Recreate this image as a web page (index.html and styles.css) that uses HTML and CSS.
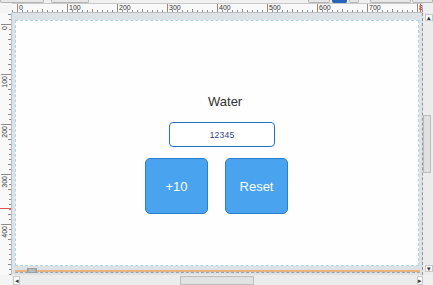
FILE: index.html
```html
<!DOCTYPE html>
<html>
<head>
<meta charset="utf-8">
<link rel="stylesheet" href="styles.css">
</head>
<body>
<div class="app">
  <div class="toolbar">
    <span class="tb w45"></span>
    <span class="tb w40"></span>
    <span class="tb-space"></span>
    <span class="tb w22"></span>
    <span class="tb tb-blue w16"></span>
    <span class="tb w10"></span>
    <span class="tb w42 gap"></span>
    <span class="tb w20"></span>
  </div>

  <div class="corner"></div>
  <div class="hruler">
    <div class="hlabels">
      <span>0</span><span>100</span><span>200</span><span>300</span><span>400</span><span>500</span><span>600</span><span>700</span><span>8</span>
    </div>
    <div class="hmark"></div>
  </div>
  <div class="corner-r"></div>

  <div class="vruler">
    <div class="vlabels">
      <div class="vl"><span>0</span></div>
      <div class="vl"><span>100</span></div>
      <div class="vl"><span>200</span></div>
      <div class="vl"><span>300</span></div>
      <div class="vl"><span>400</span></div>
    </div>
    <div class="vmark"></div>
  </div>

  <div class="workspace">
    <div class="canvas">
      <div class="title">Water</div>
      <div class="field">12345</div>
      <div class="buttons">
        <div class="btn">+10</div>
        <div class="btn">Reset</div>
      </div>
    </div>
    <div class="foot">
      <span class="foot-tag">800</span>
    </div>
  </div>

  <div class="vscroll">
    <div class="arrow up">&#9652;</div>
    <div class="vtrack"><div class="vthumb"></div></div>
    <div class="arrow down">&#9662;</div>
  </div>

  <div class="corner"></div>
  <div class="hscroll">
    <div class="arrow left">&#9666;</div>
    <div class="htrack"><div class="hthumb"></div></div>
    <div class="arrow right">&#9656;</div>
  </div>
  <div class="corner-r"></div>
</div>
</body>
</html>
```

FILE: styles.css
```css
* { box-sizing: border-box; }
html, body {
  margin: 0;
  padding: 0;
}
body {
  width: 433px;
  height: 285px;
  overflow: hidden;
  background: #f0f0f0;
  font-family: "Liberation Sans", Arial, sans-serif;
}
.app {
  display: grid;
  grid-template-columns: 12px 411px 10px;
  grid-template-rows: 3px 10px 262px 10px;
  width: 433px;
  height: 285px;
}

/* toolbar strip */
.toolbar {
  grid-column: 1 / 4;
  display: flex;
  align-items: flex-end;
  gap: 7px;
  overflow: hidden;
}
.tb {
  height: 3px;
  background: #e6e6e6;
  border: 1px solid #b4b4b4;
  border-top: none;
  border-radius: 0 0 2px 2px;
}
.tb-blue { background: #2a63b8; border-color: #2a63b8; }
.tb-space { flex: 0 0 205px; }
.w45 { width: 45px; }
.w40 { width: 40px; }
.w22 { width: 22px; }
.w16 { width: 16px; margin-left: -5px; }
.w10 { width: 10px; margin-left: -5px; }
.w42 { width: 42px; }
.gap { margin-left: 4px; }
.w20 { width: 22px; margin-left: -6px; }

.corner { background: #f4f4f4; }
.corner-r { background: #f0f0f0; }

/* horizontal ruler */
.hruler {
  position: relative;
  min-width: 0;
  background-color: #f9f9f9;
  border-top: 1px solid #c9c9c9;
  border-bottom: 1px solid #b9bec3;
  background-image:
    linear-gradient(to right, #8a8a8a 1px, transparent 1px),
    linear-gradient(to right, #8a8a8a 1px, transparent 1px);
  background-size: 5px 2px, 25px 3px;
  background-repeat: repeat-x;
  background-position: 5px 100%, 5px 100%;
  overflow: hidden;
}
.hlabels {
  display: flex;
  padding-left: 5px;
  height: 100%;
}
.hlabels span {
  flex: 0 0 50px;
  border-left: 1px solid #8a8a8a;
  font-size: 7px;
  line-height: 7px;
  color: #333;
  padding-left: 1px;
  height: 8px;
}
.hmark {
  position: absolute;
  left: 408px;
  top: 0;
  width: 1px;
  height: 100%;
  background: #e55050;
}

/* vertical ruler */
.vruler {
  position: relative;
  min-height: 0;
  background-color: #f9f9f9;
  border-right: 1px solid #b9bec3;
  background-image:
    linear-gradient(to bottom, #8a8a8a 1px, transparent 1px),
    linear-gradient(to bottom, #8a8a8a 1px, transparent 1px);
  background-size: 2px 5px, 3px 25px;
  background-repeat: repeat-y;
  background-position: 100% 1px, 100% 1px;
  overflow: hidden;
}
.vlabels {
  display: flex;
  flex-direction: column;
  margin-top: 11px;
}
.vl {
  flex: 0 0 50px;
  border-top: 1px solid #8a8a8a;
  width: 9px;
  margin-left: 1px;
}
.vl span {
  display: block;
  writing-mode: vertical-rl;
  transform: rotate(180deg);
  font-size: 7px;
  line-height: 7px;
  color: #333;
  padding-bottom: 1px;
}
.vmark {
  position: absolute;
  left: 0;
  top: 195px;
  width: 100%;
  height: 1px;
  background: #e55050;
}

/* workspace */
.workspace {
  min-width: 0;
  min-height: 0;
  background: #dde2e7;
  padding: 7px 1px 0 3px;
  border-right: 1px dashed #8f969c;
  display: flex;
  flex-direction: column;
}
.canvas {
  flex: 0 0 246px;
  margin-right: 2px;
  background: #fefefe;
  border: 1px dashed #a9d4ea;
  display: flex;
  flex-direction: column;
  align-items: flex-start;
  padding-top: 73px;
}
.foot {
  position: relative;
  margin-top: 4px;
  height: 3px;
  border-top: 2px solid #e7b27c;
  border-left: 1px solid #e7b27c;
  border-right: 2px solid #e7b27c;
  border-bottom: 1px dashed #9aa1a7;
  margin-right: 1px;
}
.foot-tag {
  position: absolute;
  left: 11px;
  top: -4px;
  height: 5px;
  width: 10px;
  background: #9aa0a6;
  color: #e8e8e8;
  font-size: 4px;
  line-height: 5px;
  text-align: center;
}

.title {
  margin-left: 192px;
  font-size: 13px;
  line-height: 15px;
  color: #333;
}
.field {
  margin-top: 13px;
  margin-left: 153px;
  width: 106px;
  height: 25px;
  border: 1.5px solid #2171c7;
  border-radius: 4px;
  background: #fff;
  font-size: 8.5px;
  color: #2e3f7a;
  display: flex;
  align-items: center;
  justify-content: center;
  letter-spacing: 0.2px;
}
.buttons {
  margin-top: 11px;
  margin-left: 129px;
  display: flex;
  gap: 17px;
}
.btn {
  width: 63px;
  height: 56px;
  background: #4aa3ef;
  border: 1px solid #2b7fd0;
  border-radius: 5px;
  color: #fff;
  font-size: 13px;
  display: flex;
  align-items: center;
  justify-content: center;
}

/* scrollbars */
.vscroll {
  min-height: 0;
  background: #ececec;
  display: flex;
  flex-direction: column;
  padding-bottom: 3px;
}
.arrow {
  font-size: 7px;
  line-height: 7px;
  color: #333;
  background: #fafafa;
  border: 1px solid #c8c8c8;
  display: flex;
  align-items: center;
  justify-content: center;
}
.up, .down { height: 7px; margin: 1px 0 0 2px; }
.vtrack { flex: 1; padding-top: 94px; }
.vthumb {
  width: 8px;
  height: 58px;
  background: #e0e0e0;
  border: 1px solid #bdbdbd;
}
.hscroll {
  min-width: 0;
  background: #ececec;
  display: flex;
  align-items: stretch;
  padding-top: 1px;
}
.left { width: 7px; margin-left: 1px; }
.right { width: 6px; }
.htrack { flex: 1; padding-left: 160px; }
.hthumb {
  width: 74px;
  height: 100%;
  background: #e2e2e2;
  border: 1px solid #bdbdbd;
}
```
